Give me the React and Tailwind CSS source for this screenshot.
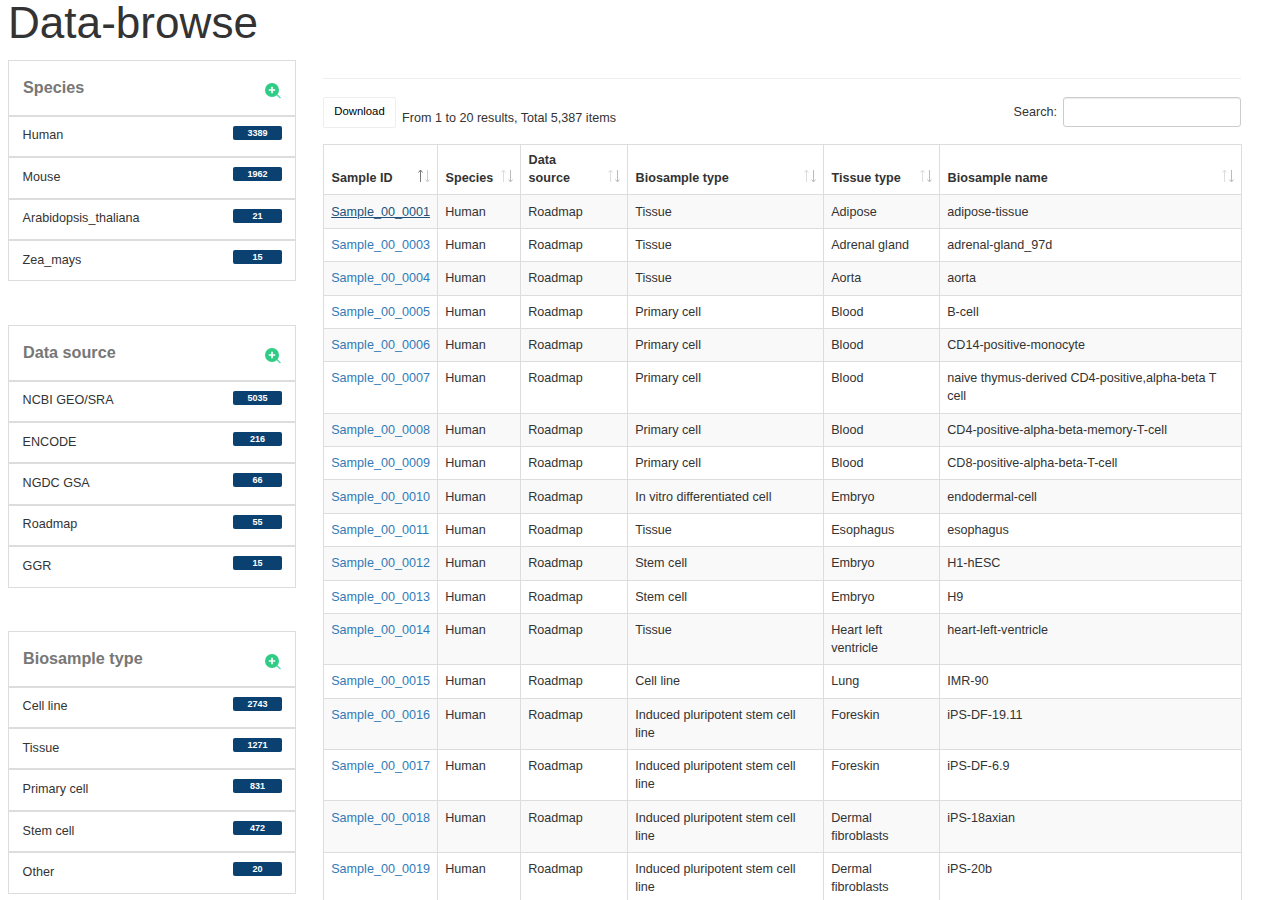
import React from 'react';

const facets = [
  { title: 'Species', items: [['Human', 3389], ['Mouse', 1962], ['Arabidopsis_thaliana', 21], ['Zea_mays', 15]] },
  { title: 'Data source', items: [['NCBI GEO/SRA', 5035], ['ENCODE', 216], ['NGDC GSA', 66], ['Roadmap', 55], ['GGR', 15]] },
  { title: 'Biosample type', items: [['Cell line', 2743], ['Tissue', 1271], ['Primary cell', 831], ['Stem cell', 472], ['Other', 20]] },
];

const columns = [
  { label: 'Sample ID', width: 'w-[114px]', active: true },
  { label: 'Species', width: 'w-[83px]' },
  { label: 'Data source', width: 'w-[107px]' },
  { label: 'Biosample type', width: 'w-[196px]' },
  { label: 'Tissue type', width: 'w-[116px]' },
  { label: 'Biosample name', width: 'w-[302px]' },
];

const ipsc = 'Induced pluripotent stem cell line';
const rows = [
  ['0001', 'Tissue', 'Adipose', 'adipose-tissue'],
  ['0003', 'Tissue', 'Adrenal gland', 'adrenal-gland_97d'],
  ['0004', 'Tissue', 'Aorta', 'aorta'],
  ['0005', 'Primary cell', 'Blood', 'B-cell'],
  ['0006', 'Primary cell', 'Blood', 'CD14-positive-monocyte'],
  ['0007', 'Primary cell', 'Blood', 'naive thymus-derived CD4-positive,alpha-beta T cell'],
  ['0008', 'Primary cell', 'Blood', 'CD4-positive-alpha-beta-memory-T-cell'],
  ['0009', 'Primary cell', 'Blood', 'CD8-positive-alpha-beta-T-cell'],
  ['0010', 'In vitro differentiated cell', 'Embryo', 'endodermal-cell'],
  ['0011', 'Tissue', 'Esophagus', 'esophagus'],
  ['0012', 'Stem cell', 'Embryo', 'H1-hESC'],
  ['0013', 'Stem cell', 'Embryo', 'H9'],
  ['0014', 'Tissue', 'Heart left ventricle', 'heart-left-ventricle'],
  ['0015', 'Cell line', 'Lung', 'IMR-90'],
  ['0016', ipsc, 'Foreskin', 'iPS-DF-19.11'],
  ['0017', ipsc, 'Foreskin', 'iPS-DF-6.9'],
  ['0018', ipsc, 'Dermal fibroblasts', 'iPS-18axian'],
  ['0019', ipsc, 'Dermal fibroblasts', 'iPS-20b'],
];

const ZoomIcon = () => (
  <svg width="17" height="17" viewBox="0 0 17 17" className="shrink-0">
    <line x1="11" y1="11" x2="15.5" y2="15" stroke="#4fd6b0" strokeWidth="1.4" />
    <circle cx="7" cy="7" r="7" fill="#2ecc85" />
    <path d="M7 3.8v6.4M3.8 7h6.4" stroke="#fff" strokeWidth="1.7" />
  </svg>
);

const SortIcon = ({ active }) => (
  <svg width="12" height="14" viewBox="0 0 12 14" className="absolute right-[7px] top-[24px]" fill="none" strokeWidth="1">
    <path d="M2.5 13V1.5M0.5 3.5l2-2.5 2 2.5" stroke={active ? '#777' : '#ddd'} />
    <path d="M9.5 1v11.5M7.5 10.5l2 2.5 2-2.5" stroke={active ? '#ccc' : '#bbb'} />
  </svg>
);

const Facet = ({ title, items }) => (
  <div className="border border-[#ddd] bg-white">
    <div className="h-[53.8px] flex justify-between pl-[14px] pr-[13px]">
      <h3 className="mt-[16px] text-[16.2px] leading-[20px] font-bold text-[#777]">{title}</h3>
      <div className="mt-[22px]"><ZoomIcon /></div>
    </div>
    {items.map(([name, count]) => (
      <div key={name} className="h-[41.4px] border-t-2 border-[#ddd] flex justify-between pl-[13.6px] pr-[13px]">
        <span className="mt-[8.7px] text-[12.6px] leading-[20px] text-[#333]">{name}</span>
        <span className="mt-[9px] w-[49px] h-[14px] rounded-[2px] bg-[#0a4170] text-white text-[9px] leading-[14px] font-bold text-center">{count}</span>
      </div>
    ))}
  </div>
);

const App = () => (
  <div className="h-[900px] overflow-hidden bg-white text-[#333] text-[12.6px] font-['Liberation_Sans',Arial,sans-serif]">
    <h1 className="pl-2 text-[44.1px] leading-[45px] font-normal">Data-browse</h1>
    <div className="flex mt-[15px] pl-2">
      <aside className="w-[288px] shrink-0 flex flex-col gap-[43.4px]">
        {facets.map((f) => <Facet key={f.title} {...f} />)}
      </aside>
      <main className="ml-[27px] w-[918px] pt-[18px]">
        <hr className="border-t border-[#eee]" />
        <div className="mt-[18px] h-[47px] flex justify-between items-start">
          <div className="flex">
            <button className="w-[73px] h-[31px] border border-[#eee] rounded-[2px] bg-white text-[11.34px] text-black pb-[2px]">Download</button>
            <span className="ml-[6px] mt-[12px] leading-[18px]">From 1 to 20 results, Total 5,387 items</span>
          </div>
          <label className="flex items-center h-[30px]">
            Search:
            <input className="ml-[6px] w-[178px] h-[30px] border border-[#ccc] rounded-[3px] bg-white shadow-[inset_0_1px_1px_rgba(0,0,0,0.075)]" />
          </label>
        </div>
        <table className="w-[918px] table-fixed border-collapse leading-[18px] -mt-[0.4px]">
          <thead>
            <tr className="h-[50.8px]">
              {columns.map((c) => (
                <th key={c.label} className={`${c.width} relative border border-[#ddd] px-[7.6px] pb-[7.4px] pt-[5px] align-bottom text-left font-bold`}>
                  {c.label === 'Data source' ? <>Data<br />source</> : c.label}
                  <SortIcon active={c.active} />
                </th>
              ))}
            </tr>
          </thead>
          <tbody>
            {rows.map(([id, type, tissue, name], i) => (
              <tr key={id} className={i % 2 === 0 ? 'bg-[#f9f9f9]' : 'bg-white'}>
                <td className="border border-[#ddd] px-[7.2px] py-[7.2px] align-top">
                  <a href="#" className={i === 0 ? 'text-[#23527c] underline' : 'text-[#337ab7]'}>Sample_00_{id}</a>
                </td>
                <td className="border border-[#ddd] px-[7.2px] py-[7.2px] align-top">Human</td>
                <td className="border border-[#ddd] px-[7.2px] py-[7.2px] align-top">Roadmap</td>
                <td className="border border-[#ddd] px-[7.2px] py-[7.2px] align-top">{type}</td>
                <td className="border border-[#ddd] px-[7.2px] py-[7.2px] align-top">{tissue}</td>
                <td className="border border-[#ddd] px-[7.2px] py-[7.2px] align-top">{name}</td>
              </tr>
            ))}
          </tbody>
        </table>
      </main>
    </div>
  </div>
);

export default App;
